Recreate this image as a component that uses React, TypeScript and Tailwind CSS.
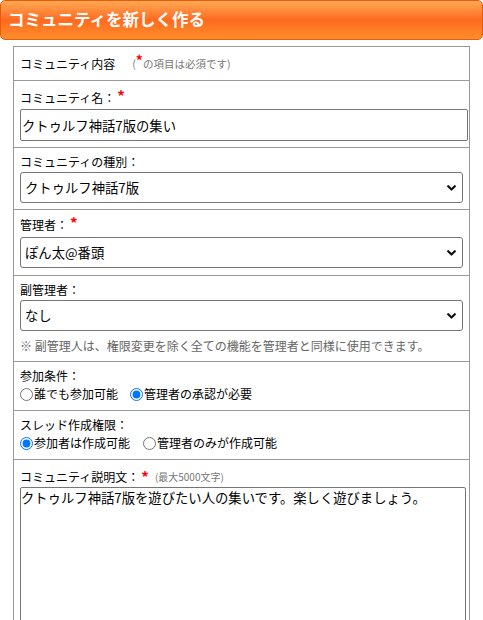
import React, { useState } from 'react';

const FONT = 'font-["Meiryo","Noto_Sans_CJK_JP",sans-serif]';

const Req = () => <span className="text-[#ff0000] font-bold text-[15px] leading-none relative top-[-1px] ml-[2px]">*</span>;

const Chevron = () => (
  <svg className="absolute right-[7px] top-1/2 -translate-y-1/2 pointer-events-none" width="9" height="6" viewBox="0 0 9 6">
    <path d="M1.2 1.2 L4.5 4.5 L7.8 1.2" fill="none" stroke="#111" strokeWidth="2.2" strokeLinecap="round" strokeLinejoin="round" />
  </svg>
);

interface SelectProps {
  value: string;
  options: string[];
  onChange: (v: string) => void;
}

const Select: React.FC<SelectProps> = ({ value, options, onChange }) => (
  <div className="relative w-[443px] h-[31px]">
    <select
      value={value}
      onChange={(e) => onChange(e.target.value)}
      className="appearance-none w-full h-full border border-[#767676] rounded-[3px] bg-white pl-[4px] pr-6 text-[13.33px] text-black outline-none"
    >
      {options.map((o) => (
        <option key={o}>{o}</option>
      ))}
    </select>
    <Chevron />
  </div>
);

const Radio: React.FC<{ name: string; label: string; checked: boolean; onChange: () => void }> = ({ name, label, checked, onChange }) => (
  <label className="flex items-center">
    <input type="radio" name={name} checked={checked} onChange={onChange} className="m-0 size-[13px] mr-[1px]" />
    <span>{label}</span>
  </label>
);

export default function App() {
  const [name, setName] = useState('クトゥルフ神話7版の集い');
  const [kind, setKind] = useState('クトゥルフ神話7版');
  const [admin, setAdmin] = useState('ぽん太@番頭');
  const [subAdmin, setSubAdmin] = useState('なし');
  const [join, setJoin] = useState<'ANY' | 'APPROVAL'>('APPROVAL');
  const [thread, setThread] = useState<'MEMBER' | 'ADMIN'>('MEMBER');
  const [desc, setDesc] = useState('クトゥルフ神話7版を遊びたい人の集いです。楽しく遊びましょう。');

  return (
    <div className={`w-[483px] min-h-[620px] bg-white text-black ${FONT}`}>
      {/* Title bar */}
      <div className="h-[40px] rounded-[5px] border border-[#e45c12] bg-gradient-to-b from-[#ffa852] via-[#ff6a1f] to-[#ff8d2a] flex items-center pl-[7px] pb-[1px]">
        <h1 className="text-white font-bold text-[16.5px]">コミュニティを新しく作る</h1>
      </div>

      {/* Form table */}
      <div className="mx-[13px] mt-[6px] border border-[#999] text-[12px]">
        <div className="h-[33px] flex items-center px-[6px]">
          <span>コミュニティ内容</span>
          <span className="ml-[17px] text-[10.5px] text-[#777]">
            (<span className="text-[#ff0000] font-bold text-[14px] leading-none relative top-[-2px]">*</span>の項目は必須です)
          </span>
        </div>

        <div className="border-t border-[#999] px-[6px] pt-[7px] pb-[6px]">
          <div className="leading-[20px] h-[20px]">
            コミュニティ名：<Req />
          </div>
          <input
            value={name}
            onChange={(e) => setName(e.target.value)}
            className="mt-[1px] block w-[448px] h-[32px] border border-[#767676] rounded-[2px] px-[1px] text-[13.33px] outline-none"
          />
        </div>

        <div className="border-t border-[#999] px-[6px] pt-[4px] pb-[6px]">
          <div className="leading-[20px] h-[20px]">コミュニティの種別：</div>
          <Select value={kind} onChange={setKind} options={['クトゥルフ神話7版', 'クトゥルフ神話6版', 'ソード・ワールド2.5']} />
        </div>

        <div className="border-t border-[#999] px-[6px] pt-[5px] pb-[7px]">
          <div className="leading-[20px] h-[20px]">
            管理者：<Req />
          </div>
          <div className="mt-[2px]">
            <Select value={admin} onChange={setAdmin} options={['ぽん太@番頭']} />
          </div>
        </div>

        <div className="border-t border-[#999] px-[6px] pt-[4px] pb-[5px]">
          <div className="leading-[20px] h-[20px]">副管理者：</div>
          <Select value={subAdmin} onChange={setSubAdmin} options={['なし']} />
          <p className="mt-[5px] leading-[20px] text-[#666]">※ 副管理人は、権限変更を除く全ての機能を管理者と同様に使用できます。</p>
        </div>

        <div className="border-t border-[#999] px-[6px] pt-[5px] pb-[7px] leading-[18px]">
          <div>参加条件：</div>
          <div className="flex items-center gap-[12px]">
            <Radio name="join" label="誰でも参加可能" checked={join === 'ANY'} onChange={() => setJoin('ANY')} />
            <Radio name="join" label="管理者の承認が必要" checked={join === 'APPROVAL'} onChange={() => setJoin('APPROVAL')} />
          </div>
        </div>

        <div className="border-t border-[#999] px-[6px] pt-[5px] pb-[7px] leading-[18px]">
          <div>スレッド作成権限：</div>
          <div className="flex items-center gap-[13px]">
            <Radio name="thread" label="参加者は作成可能" checked={thread === 'MEMBER'} onChange={() => setThread('MEMBER')} />
            <Radio name="thread" label="管理者のみが作成可能" checked={thread === 'ADMIN'} onChange={() => setThread('ADMIN')} />
          </div>
        </div>

        <div className="border-t border-[#999] px-[6px] pt-[8px] pb-[8px]">
          <div className="leading-[18px] h-[18px] flex items-center">
            <span>コミュニティ説明文：</span>
            <Req />
            <span className="ml-[6px] text-[10px] text-[#777]">(最大5000文字)</span>
          </div>
          <textarea
            value={desc}
            onChange={(e) => setDesc(e.target.value)}
            className="mt-[1px] block w-[446px] h-[220px] border border-[#767676] rounded-[2px] px-0 py-[1px] text-[13.33px] leading-[18px] outline-none resize-none"
          />
        </div>
      </div>
    </div>
  );
}
